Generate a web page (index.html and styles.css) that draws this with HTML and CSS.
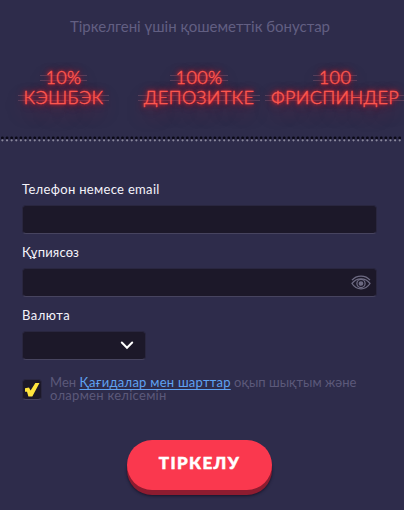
FILE: index.html
```
<!DOCTYPE html>
<html lang="kk">
<head>
<meta charset="utf-8">
<title>Тіркелу</title>
<link rel="stylesheet" href="styles.css">
</head>
<body>
<main class="signup">
  <section class="bonuses">
    <h1 class="bonus-title">Тіркелгені үшін қошеметтік бонустар</h1>
    <div class="bonus-list">
      <div class="bonus cashback"><span class="neon amount">10%</span><span class="neon name">КЭШБЭК</span></div>
      <div class="bonus deposit"><span class="neon amount">100%</span><span class="neon name">ДЕПОЗИТКЕ</span></div>
      <div class="bonus spins"><span class="neon amount">100</span><span class="neon name">ФРИСПИНДЕР</span></div>
    </div>
  </section>
  <svg class="perforation" width="404" height="6" aria-hidden="true">
    <line class="hole" x1="2.4" y1="2" x2="404" y2="2"/>
    <line class="glint" x1="2.4" y1="4.3" x2="404" y2="4.3"/>
  </svg>
  <form class="form">
    <label class="label login-label" for="login">Телефон немесе email</label>
    <input class="field" id="login" type="text">
    <label class="label pass-label" for="pass">Құпиясөз</label>
    <div class="field password">
      <input class="bare" id="pass" type="password">
      <svg class="eye" width="20" height="16" viewBox="0 0 20 16">
        <path d="M1 5.2C5.5-.2 14.500-.2 19 5.200"/>
        <path d="M1 8.500C5.500 2.300 14.500 2.300 19 8.500C14.500 15.700 5.500 15.700 1 8.500Z"/>
        <circle cx="10" cy="8.500" r="4.100"/>
        <circle class="pupil" cx="10" cy="8.500" r="1.700"/>
      </svg>
    </div>
    <span class="label currency-label">Валюта</span>
    <div class="field currency">
      <svg width="14" height="9" viewBox="0 0 14 9"><path d="M1.800 1.500L7 6.800L12.200 1.500"/></svg>
    </div>
    <div class="terms">
      <span class="check"><svg width="18" height="19" viewBox="0 0 18 19"><path d="M2 8.200L6 7.500L7.600 10.500L12.300 3L16.500 3L9.300 16.500L5.400 16.500L4 11.800L2 11.800Z"/></svg></span>
      <p class="terms-text"><span class="line first">Мен <a href="#">Қағидалар мен шарттар</a> оқып шықтым және</span><span class="line second">олармен келісемін</span></p>
    </div>
    <button class="submit" type="button">ТІРКЕЛУ</button>
  </form>
</main>
</body>
</html>
```
FILE: styles.css
```
* { box-sizing: border-box; }
body {
  margin: 0;
  background: #2e2c4b;
  font-family: Lato, "Noto Sans", sans-serif;
  overflow: hidden;
}
.signup { width: 404px; height: 510px; overflow: hidden; }
.bonuses { height: 136px; padding-top: 16px; }
.bonus-title {
  margin: 0 4px 0 0;
  text-align: center;
  font-size: 15px;
  line-height: 20px;
  font-weight: 400;
  color: #625f82;
  white-space: nowrap;
}
.bonus-list { display: flex; margin-top: 31px; padding-left: 19px; }
.bonus { display: flex; flex-direction: column; align-items: center; flex: none; }
.cashback { width: 89px; margin-right: 30px; }
.deposit { width: 122px; margin-right: 4px; }
.spins { width: 142px; }
.neon {
  height: 20px;
  line-height: 20px;
  padding: 0 6px;
  font-size: 18px;
  font-weight: 300;
  letter-spacing: .35px;
  white-space: nowrap;
  color: #ff5a50;
  -webkit-text-stroke: .35px #ff5a50;
  text-shadow: 0 0 3px #f4252a, 0 0 5px #e51d26, 0 0 8px #c81b28, 0 8px 18px #c51e3890;
  background: linear-gradient(#55415d, #55415d) 0 8px / 100% 1px no-repeat,
              linear-gradient(#55415d, #55415d) 0 13px / 100% 1px no-repeat;
}
.perforation { display: block; }
.perforation line { stroke-width: 2.9; stroke-linecap: round; stroke-dasharray: 0 4.62; }
.hole { stroke: #0b0917; }
.perforation .glint { stroke: #8b899f; stroke-width: 2.2; }
.form { padding: 37px 27px 0 22px; display: flex; flex-direction: column; align-items: flex-start; }
.label { height: 20px; line-height: 20px; font-size: 13px; color: #f4f3fa; white-space: nowrap; }
.login-label { letter-spacing: .32px; }
.pass-label { letter-spacing: .17px; }
.currency-label { letter-spacing: .5px; }
.field {
  width: 355px;
  height: 29px;
  margin: 6px 0 8px;
  border: 1px solid #29263f;
  border-bottom-color: #47445f;
  border-radius: 4px;
  background: #1c1829;
  outline: 0;
}
.password, .currency { display: flex; align-items: center; justify-content: flex-end; }
.bare { flex: 1; border: 0; background: none; outline: 0; }
.eye { margin-right: 5px; }
.eye path, .eye circle { fill: none; stroke: #6d6a82; stroke-width: 1.3; }
.eye .pupil { fill: #6d6a82; }
.currency { width: 124px; padding-right: 11px; }
.currency path { fill: none; stroke: #fff; stroke-width: 2; stroke-linecap: round; }
.terms { display: flex; margin-top: 8px; gap: 8px; }
.check {
  width: 20px;
  height: 21px;
  margin-top: 3px;
  border-radius: 4px;
  background: #1c1829;
  border: 1px solid #29263f;
  border-bottom-color: #47445f;
}
.check svg { display: block; }
.check path { fill: #ffe43d; }
.terms-text { margin: 0; font-size: 13px; line-height: 13px; color: #5c597a; white-space: nowrap; }
.line { display: block; }
.first { letter-spacing: .02px; }
.second { letter-spacing: .28px; }
.terms-text a { color: #5fa2f2; text-decoration: underline; text-underline-offset: 2px; letter-spacing: .25px; }
.submit {
  width: 145px;
  height: 50px;
  margin: 38px 0 0 105px;
  padding: 0 0 4px;
  border: 0;
  border-radius: 25px;
  background: #fa384e;
  box-shadow: 0 5px 0 #8e1c30, 0 6px 3px #17152a;
  color: #fff;
  font: 900 17px/20px Lato, "Noto Sans", sans-serif;
  letter-spacing: 1.4px;
  -webkit-text-stroke: .5px #fff;
}
```
